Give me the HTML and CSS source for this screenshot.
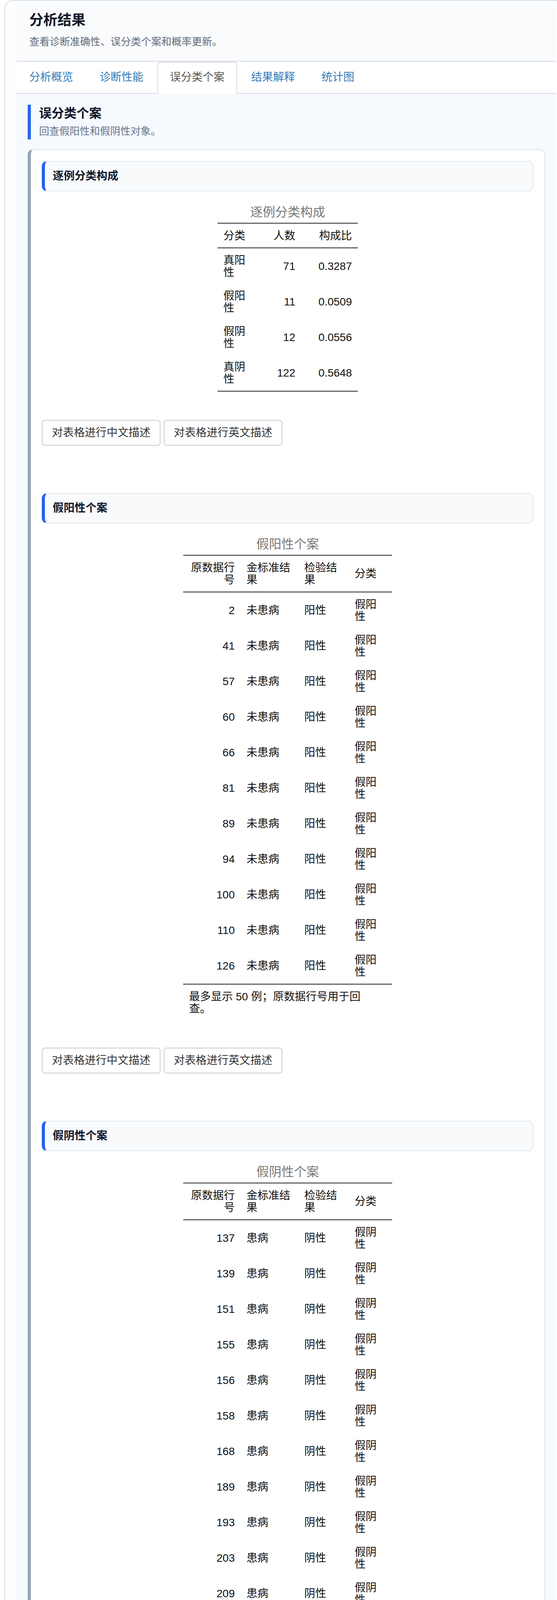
FILE: index.html
```html
<!DOCTYPE html>
<html lang="zh-CN">
<head>
<meta charset="utf-8">
<title>分析结果</title>
<link rel="stylesheet" href="styles.css">
</head>
<body>
<div class="app">
  <div class="main">
    <header class="page-head">
      <h1 class="page-title">分析结果</h1>
      <p class="page-sub">查看诊断准确性、误分类个案和概率更新。</p>
    </header>
    <nav class="tabs">
      <a class="tab">分析概览</a>
      <a class="tab">诊断性能</a>
      <a class="tab active">误分类个案</a>
      <a class="tab">结果解释</a>
      <a class="tab">统计图</a>
    </nav>
    <section class="panel">
      <div class="sec-head">
        <h2 class="sec-title">误分类个案</h2>
        <p class="sec-sub">回查假阳性和假阴性对象。</p>
      </div>
      <div class="card">
        <div class="block">
          <div class="block-head">逐例分类构成</div>
          <div class="tbl-wrap">
            <table class="stat t-comp">
              <caption>逐例分类构成</caption>
              <colgroup><col class="c-a"><col class="c-b"><col class="c-c"></colgroup>
              <thead>
                <tr><th class="l">分类</th><th class="r">人数</th><th class="r">构成比</th></tr>
              </thead>
              <tbody>
                <tr><td class="l">真阳性</td><td class="r">71</td><td class="r">0.3287</td></tr>
                <tr><td class="l">假阳性</td><td class="r">11</td><td class="r">0.0509</td></tr>
                <tr><td class="l">假阴性</td><td class="r">12</td><td class="r">0.0556</td></tr>
                <tr><td class="l">真阴性</td><td class="r">122</td><td class="r">0.5648</td></tr>
              </tbody>
            </table>
          </div>
          <div class="btns">
            <button class="btn">对表格进行中文描述</button>
            <button class="btn">对表格进行英文描述</button>
          </div>
        </div>

        <div class="block">
          <div class="block-head">假阳性个案</div>
          <div class="tbl-wrap">
            <table class="stat t-case">
              <caption>假阳性个案</caption>
              <colgroup><col class="c-1"><col class="c-2"><col class="c-3"><col class="c-4"></colgroup>
              <thead>
                <tr><th class="r">原数据行号</th><th class="l">金标准结果</th><th class="l">检验结果</th><th class="l">分类</th></tr>
              </thead>
              <tbody>
                <tr><td class="r">2</td><td class="l">未患病</td><td class="l">阳性</td><td class="l">假阳性</td></tr>
                <tr><td class="r">41</td><td class="l">未患病</td><td class="l">阳性</td><td class="l">假阳性</td></tr>
                <tr><td class="r">57</td><td class="l">未患病</td><td class="l">阳性</td><td class="l">假阳性</td></tr>
                <tr><td class="r">60</td><td class="l">未患病</td><td class="l">阳性</td><td class="l">假阳性</td></tr>
                <tr><td class="r">66</td><td class="l">未患病</td><td class="l">阳性</td><td class="l">假阳性</td></tr>
                <tr><td class="r">81</td><td class="l">未患病</td><td class="l">阳性</td><td class="l">假阳性</td></tr>
                <tr><td class="r">89</td><td class="l">未患病</td><td class="l">阳性</td><td class="l">假阳性</td></tr>
                <tr><td class="r">94</td><td class="l">未患病</td><td class="l">阳性</td><td class="l">假阳性</td></tr>
                <tr><td class="r">100</td><td class="l">未患病</td><td class="l">阳性</td><td class="l">假阳性</td></tr>
                <tr><td class="r">110</td><td class="l">未患病</td><td class="l">阳性</td><td class="l">假阳性</td></tr>
                <tr><td class="r">126</td><td class="l">未患病</td><td class="l">阳性</td><td class="l">假阳性</td></tr>
              </tbody>
              <tfoot>
                <tr><td colspan="4"><div class="note">最多显示 50 例；原数据行号用于回查。</div></td></tr>
              </tfoot>
            </table>
          </div>
          <div class="btns">
            <button class="btn">对表格进行中文描述</button>
            <button class="btn">对表格进行英文描述</button>
          </div>
        </div>

        <div class="block">
          <div class="block-head">假阴性个案</div>
          <div class="tbl-wrap">
            <table class="stat t-case">
              <caption>假阴性个案</caption>
              <colgroup><col class="c-1"><col class="c-2"><col class="c-3"><col class="c-4"></colgroup>
              <thead>
                <tr><th class="r">原数据行号</th><th class="l">金标准结果</th><th class="l">检验结果</th><th class="l">分类</th></tr>
              </thead>
              <tbody>
                <tr><td class="r">137</td><td class="l">患病</td><td class="l">阴性</td><td class="l">假阴性</td></tr>
                <tr><td class="r">139</td><td class="l">患病</td><td class="l">阴性</td><td class="l">假阴性</td></tr>
                <tr><td class="r">151</td><td class="l">患病</td><td class="l">阴性</td><td class="l">假阴性</td></tr>
                <tr><td class="r">155</td><td class="l">患病</td><td class="l">阴性</td><td class="l">假阴性</td></tr>
                <tr><td class="r">156</td><td class="l">患病</td><td class="l">阴性</td><td class="l">假阴性</td></tr>
                <tr><td class="r">158</td><td class="l">患病</td><td class="l">阴性</td><td class="l">假阴性</td></tr>
                <tr><td class="r">168</td><td class="l">患病</td><td class="l">阴性</td><td class="l">假阴性</td></tr>
                <tr><td class="r">189</td><td class="l">患病</td><td class="l">阴性</td><td class="l">假阴性</td></tr>
                <tr><td class="r">193</td><td class="l">患病</td><td class="l">阴性</td><td class="l">假阴性</td></tr>
                <tr><td class="r">203</td><td class="l">患病</td><td class="l">阴性</td><td class="l">假阴性</td></tr>
                <tr><td class="r">209</td><td class="l">患病</td><td class="l">阴性</td><td class="l">假阴性</td></tr>
                <tr><td class="r">212</td><td class="l">患病</td><td class="l">阴性</td><td class="l">假阴性</td></tr>
              </tbody>
              <tfoot>
                <tr><td colspan="4"><div class="note">最多显示 50 例；原数据行号用于回查。</div></td></tr>
              </tfoot>
            </table>
          </div>
          <div class="btns">
            <button class="btn">对表格进行中文描述</button>
            <button class="btn">对表格进行英文描述</button>
          </div>
        </div>
      </div>
    </section>
  </div>
</div>
</body>
</html>
```

FILE: styles.css
```css
* { box-sizing: border-box; }

html {
  margin: 0;
  padding: 0;
  background: #ffffff;
  overflow-x: hidden;
}

body {
  margin: 0;
  padding: 0;
  background: #ffffff;
  font-family: "Liberation Sans", "Noto Sans CJK SC", sans-serif;
  font-size: 28px;
  line-height: 40px;
  color: #333333;
}

.app {
  margin-left: 11px;
  width: 1430px;
  border: 2px solid #d6dde8;
  border-radius: 22px;
  background: #fdfeff;
  padding-left: 30px;
  padding-right: 15px;
}

.main {
  display: flex;
  flex-direction: column;
}

.page-head {
  background: #f9fbfd;
  padding: 28px 32px 31px;
}

.page-title {
  margin: 0;
  font-size: 36px;
  line-height: 44px;
  font-weight: 700;
  color: #111827;
}

.page-sub {
  margin: 15px 0 0;
  font-size: 26px;
  line-height: 36px;
  color: #5f6b7a;
}

.tabs {
  display: flex;
  background: #ffffff;
  border-top: 2px solid #d5dbe6;
  border-bottom: 2px solid #d5dbe6;
}

.tab {
  display: block;
  padding: 18px 30px 22px;
  margin-right: 4px;
  margin-bottom: -2px;
  border: 2px solid transparent;
  border-bottom: 0;
  border-radius: 8px 8px 0 0;
  color: #337ab7;
  font-size: 28px;
  line-height: 40px;
  text-decoration: none;
}

.tab.active {
  color: #555555;
  background: #ffffff;
  border-color: #dddddd;
}

.panel {
  background: #f6f9fd;
  padding: 28px;
  border-radius: 0 0 16px 16px;
}

.sec-head {
  border-left: 8px solid #2563eb;
  padding: 0 0 3px 21px;
  margin-bottom: 25px;
}

.sec-title {
  margin: 0;
  font-size: 32px;
  line-height: 44px;
  font-weight: 700;
  color: #0f172a;
}

.sec-sub {
  margin: 6px 0 0;
  font-size: 26px;
  line-height: 36px;
  color: #64748b;
}

.card {
  background: #ffffff;
  border: 2px solid #dce4ef;
  border-left: 8px solid #94a3b8;
  border-radius: 14px;
  padding: 28px;
}

.block {
  padding-bottom: 121px;
}

.block-head {
  background: #f8fafc;
  border: 2px solid #e2e8f0;
  border-left: 8px solid #2563eb;
  border-radius: 14px;
  padding: 17px 20px;
  font-size: 28px;
  line-height: 40px;
  font-weight: 700;
  color: #0f172a;
}

.tbl-wrap {
  margin-top: 34px;
}

.stat {
  margin: 0 auto;
  border-collapse: separate;
  border-spacing: 0;
  table-layout: fixed;
  font-size: 28px;
  line-height: 31px;
  color: #111111;
}

.t-comp { width: 359px; }
.t-case { width: 535px; }

.c-a { width: 100px; }
.c-b { width: 114px; }
.c-c { width: 145px; }

.c-1 { width: 147px; }
.c-2 { width: 148px; }
.c-3 { width: 129px; }
.c-4 { width: 111px; }

.stat caption {
  caption-side: top;
  text-align: center;
  font-size: 32px;
  line-height: 38px;
  color: #777777;
  padding: 0 0 8px;
}

.stat th,
.stat td {
  padding: 14.5px 15px;
  vertical-align: middle;
  font-weight: 400;
}

.stat th {
  border-top: 3px solid #666666;
  border-bottom: 3px solid #666666;
}

.stat tbody tr:last-child td {
  border-bottom: 3px solid #666666;
}

.stat .l { text-align: left; }
.stat .r { text-align: right; }

.stat tfoot td {
  padding: 15px 15px 12px;
  text-align: left;
}

.note {
  max-width: 450px;
}

.btns {
  display: flex;
  gap: 8px;
  margin-top: 72px;
}

.btn {
  font-family: "Liberation Sans", "Noto Sans CJK SC", sans-serif;
  font-size: 28px;
  line-height: 40px;
  padding: 11px 24px;
  color: #333333;
  background: #ffffff;
  border: 2px solid #cccccc;
  border-radius: 8px;
}
```
